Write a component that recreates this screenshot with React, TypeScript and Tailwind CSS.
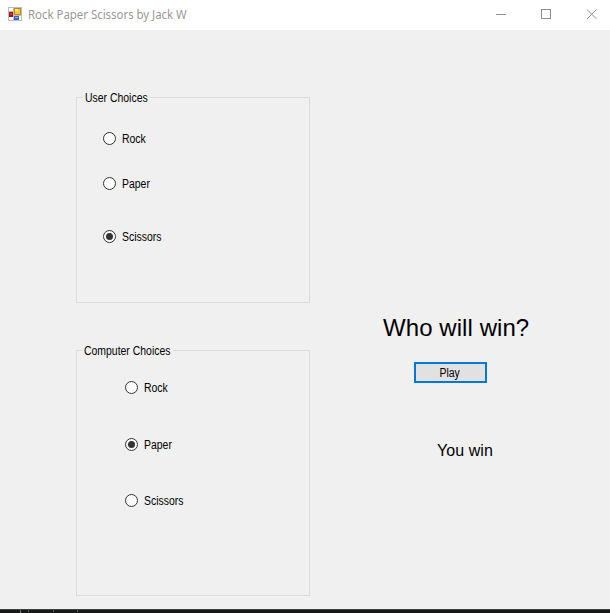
function Radio({ label, checked, className }: { label: string; checked?: boolean; className?: string }) {
  return (
    <label className={`flex h-[13px] items-center gap-[6px] ${className ?? ''}`}>
      <svg width="13" height="13" viewBox="0 0 13 13" className="shrink-0">
        <circle cx="6.5" cy="6.5" r="6" fill="#fff" stroke="#333" />
        {checked && <circle cx="6.5" cy="6.5" r="3.5" fill="#333" />}
      </svg>
      <span className="mt-[2px] origin-left scale-x-[0.87] whitespace-nowrap text-[12px] leading-[13px]">{label}</span>
    </label>
  );
}

function AppIcon() {
  return (
    <svg width="14" height="14" viewBox="0 0 14 14" shapeRendering="crispEdges">
      <rect width="14" height="14" fill="#bdbdbd" />
      <rect x="1" y="1" width="4" height="3" fill="#fff" />
      <rect x="1" y="10" width="4" height="3" fill="#fff" />
      <rect x="11" y="9" width="2" height="4" fill="#fff" />
      <rect x="1" y="5" width="4" height="5" fill="#a11212" />
      <rect x="2" y="6" width="2" height="2" fill="#d2402c" />
      <rect x="6" y="1" width="7" height="7" fill="#c08a10" />
      <rect x="7" y="2" width="5" height="5" fill="#fcc93c" />
      <rect x="7" y="2" width="3" height="2" fill="#ffe58e" />
      <rect x="6" y="9" width="5" height="4" fill="#3466cc" />
      <rect x="7" y="10" width="3" height="1" fill="#8db5ff" />
    </svg>
  );
}

export default function App() {
  return (
    <div className="flex h-[613px] w-[610px] flex-col overflow-hidden bg-[#f0f0f0] font-['Liberation_Sans',Arial,sans-serif] text-black">
      <header className="flex h-[30px] shrink-0 items-center bg-white pl-2">
        <div className="mb-[2px]"><AppIcon /></div>
        <h1 className="ml-[6px] origin-left scale-x-[0.955] whitespace-nowrap font-['Noto_Sans',sans-serif] text-[12px] leading-[16px] tracking-[-0.03px] text-[#999]">
          Rock Paper Scissors by Jack W
        </h1>
        <svg className="ml-auto" width="114" height="30" viewBox="0 0 114 30" fill="none" stroke="#8f8f8f">
          <path d="M0 14.5h10M45.5 9.500h9v9h-9z" shapeRendering="crispEdges" />
          <path d="M91 9.500l9.500 9.500M100.500 9.500l-9.500 9.500" />
        </svg>
      </header>

      <main className="flex grow pl-[76px]">
        <div className="flex w-[234px] flex-col pt-[67px]">
          <section className="relative h-[206px] border border-[#dcdcdc] pl-[26px] pt-[34px]">
            <h2 className="absolute -top-[7px] left-[6px] w-[67px] whitespace-nowrap bg-[#f0f0f0] pl-[2px] text-[12px] leading-[14px]">
              <span className="inline-block origin-left scale-x-[0.87]">User Choices</span>
            </h2>
            <Radio label="Rock" />
            <Radio label="Paper" className="mt-[32px]" />
            <Radio label="Scissors" checked className="mt-[40px]" />
          </section>
          <section className="relative mt-[47px] h-[246px] border border-[#dcdcdc] pl-[48px] pt-[30px]">
            <h2 className="absolute -top-[7px] left-[6px] w-[90px] whitespace-nowrap bg-[#f0f0f0] pl-px text-[12px] leading-[14px]">
              <span className="inline-block origin-left scale-x-[0.87]">Computer Choices</span>
            </h2>
            <Radio label="Rock" />
            <Radio label="Paper" checked className="mt-[44px]" />
            <Radio label="Scissors" className="mt-[43px]" />
          </section>
        </div>
        <div className="flex flex-col items-start pl-[73px] pt-[284px]">
          <p className="whitespace-nowrap text-[24px] leading-[28px] tracking-[0.07px]">Who will win?</p>
          <button className="ml-[31px] mt-[20px] h-[21px] w-[73px] border-2 border-[#0078d7] bg-[#e1e1e1] pr-[2px] pt-px text-[12px] leading-[16px]">
            <span className="inline-block scale-x-[0.87]">Play</span>
          </button>
          <p className="ml-[54px] mt-[59px] whitespace-nowrap text-[16px] leading-[18px] tracking-[0.07px]">You win</p>
        </div>
      </main>

      <footer className="flex h-1 shrink-0 border-t border-[#3c4040] bg-[#171919]">
        <i className="ml-5 h-[3px] w-px bg-[#777]" />
        <i className="ml-[7px] h-[2px] w-px bg-[#555]" />
        <i className="ml-[24px] h-[2px] w-px bg-[#555]" />
        <i className="ml-[23px] h-[2px] w-px bg-[#555]" />
      </footer>
    </div>
  );
}
